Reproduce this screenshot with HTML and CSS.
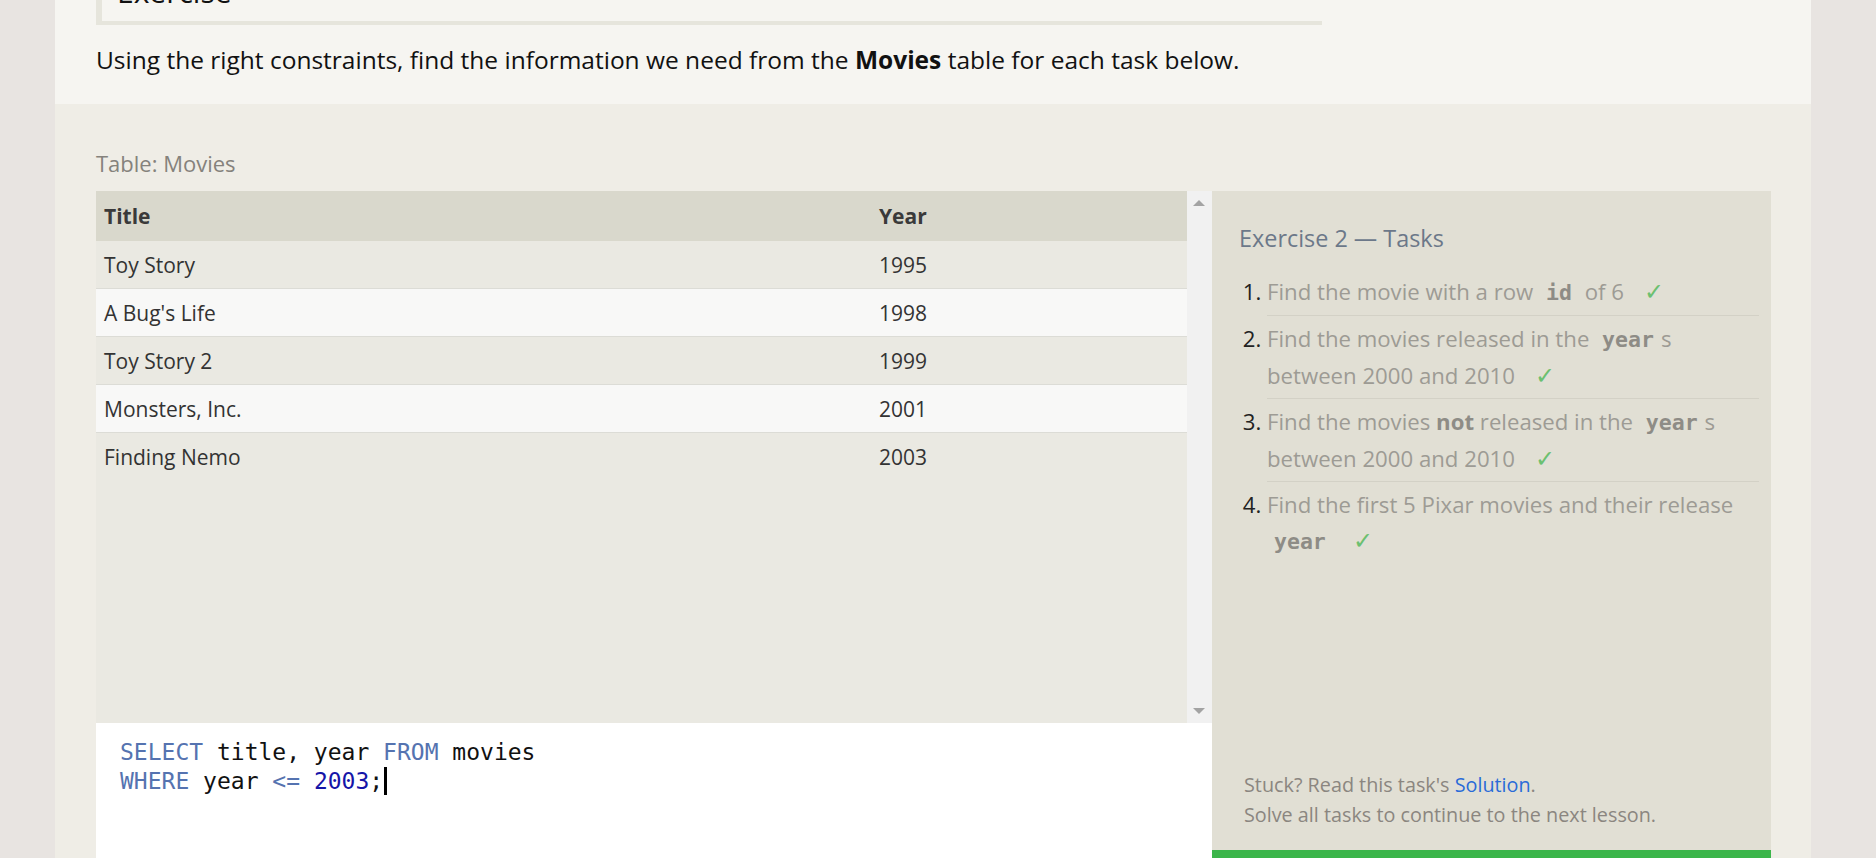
FILE: index.html
```html
<!DOCTYPE html>
<html lang="en">
<head>
<meta charset="utf-8">
<title>SQL Lesson - Exercise</title>
<link rel="stylesheet" href="styles.css">
</head>
<body>
<div class="page">
  <section class="intro">
    <div class="ex-head"><span class="ex-head-text">Exercise</span></div>
    <p class="lead">Using the right constraints, find the information we need from the <strong>Movies</strong> table for each task below.</p>
  </section>
  <section class="exercise">
    <div class="table-label">Table: Movies</div>
    <div class="workspace">
      <div class="left-col">
        <div class="table-wrap">
          <div class="table-scroll">
            <table class="movies">
              <thead>
                <tr><th class="c-title">Title</th><th>Year</th></tr>
              </thead>
              <tbody>
                <tr class="odd"><td>Toy Story</td><td>1995</td></tr>
                <tr class="even"><td>A Bug's Life</td><td>1998</td></tr>
                <tr class="odd"><td>Toy Story 2</td><td>1999</td></tr>
                <tr class="even"><td>Monsters, Inc.</td><td>2001</td></tr>
                <tr class="odd"><td>Finding Nemo</td><td>2003</td></tr>
              </tbody>
            </table>
          </div>
          <div class="scrollbar">
            <span class="arrow up"></span>
            <span class="arrow down"></span>
          </div>
        </div>
        <div class="editor">
          <div class="code-line"><span class="kw">SELECT</span> title, year <span class="kw">FROM</span> movies</div>
          <div class="code-line"><span class="kw">WHERE</span> year <span class="op">&lt;=</span> <span class="num">2003</span>;<span class="cursor"></span></div>
        </div>
      </div>
      <aside class="tasks">
        <h3 class="tasks-title">Exercise 2 — Tasks</h3>
        <ol class="task-list">
          <li><span class="task-text">Find the movie with a row <code>id</code> of 6 <span class="check">✓</span></span></li>
          <li><span class="task-text">Find the movies released in the <code>year</code>s between 2000 and 2010 <span class="check">✓</span></span></li>
          <li><span class="task-text">Find the movies <b>not</b> released in the <code>year</code>s between 2000 and 2010 <span class="check">✓</span></span></li>
          <li class="last"><span class="task-text">Find the first 5 Pixar movies and their release <code>year</code> <span class="check">✓</span></span></li>
        </ol>
        <div class="tasks-foot">
          <p>Stuck? Read this task's <a href="#">Solution</a>.</p>
          <p>Solve all tasks to continue to the next lesson.</p>
        </div>
        <div class="progress"></div>
      </aside>
    </div>
  </section>
</div>
</body>
</html>
```
FILE: styles.css
```css
html, body {
  margin: 0;
  padding: 0;
}
body {
  background: #e8e4e1;
  font-family: "Open Sans", "Noto Sans", sans-serif;
  color: #222;
  overflow: hidden;
  height: 858px;
}
.page {
  margin-left: 55px;
  width: 1756px;
  background: #efede6;
  height: 858px;
}
.intro {
  background: #f6f5f1;
  height: 104px;
  padding: 0 41px;
  box-sizing: border-box;
}
.ex-head {
  width: 1220px;
  height: 21px;
  border-left: 6px solid #e6e5dc;
  border-bottom: 4px solid #e6e5dc;
  overflow: hidden;
}
.ex-head-text {
  display: block;
  margin-left: 15px;
  margin-top: -28px;
  font-size: 30px;
  line-height: 40px;
  color: #111;
}
.lead {
  margin: 0;
  padding-top: 17px;
  font-size: 24.5px;
  line-height: 36px;
  color: #111;
}
.lead strong {
  font-weight: 700;
}
.exercise {
  padding: 0 40px 0 41px;
  border-top-right-radius: 8px;
}
.table-label {
  height: 87px;
  line-height: 30px;
  padding-top: 44px;
  box-sizing: border-box;
  font-size: 22px;
  color: #85827c;
}
.workspace {
  display: flex;
  height: 667px;
}
.left-col {
  width: 1116px;
  display: flex;
  flex-direction: column;
}
.table-wrap {
  height: 532px;
  display: flex;
  background: #eae9e2;
}
.table-scroll {
  flex: 1;
}
.movies {
  width: 100%;
  border-collapse: collapse;
  font-size: 21px;
  color: #333;
}
.movies th {
  background: #d9d8cc;
  height: 50px;
  text-align: left;
  font-weight: 700;
  padding: 0 8px;
  color: #3a3a3a;
}
.movies th.c-title {
  width: 759px;
}
.movies td {
  height: 47px;
  padding: 0 8px;
  border-bottom: 1px solid #dcdcd6;
}
.movies tr.odd td {
  background: #eae9e2;
}
.movies tr.even td {
  background: #f8f8f7;
}
.movies tr:last-child td {
  border-bottom: none;
}
.scrollbar {
  width: 25px;
  background: #f1f1f1;
  position: relative;
}
.arrow {
  position: absolute;
  left: 6px;
  width: 0;
  height: 0;
  border-left: 6px solid transparent;
  border-right: 6px solid transparent;
}
.arrow.up {
  top: 9px;
  border-bottom: 6px solid #a3a3a3;
}
.arrow.down {
  bottom: 9px;
  border-top: 6px solid #a3a3a3;
}
.editor {
  flex: 1;
  background: #fff;
  padding: 15px 24px;
  font-family: "DejaVu Sans Mono", "Liberation Mono", monospace;
  font-size: 23px;
  line-height: 29px;
  color: #111;
}
.code-line {
  white-space: pre;
}
.kw, .op {
  color: #5573b0;
}
.num {
  color: #1515a8;
}
.cursor {
  display: inline-block;
  width: 3px;
  height: 28px;
  background: #000;
  vertical-align: -6px;
  margin-left: 1px;
}
.tasks {
  width: 559px;
  background: #e1dfd4;
  display: flex;
  flex-direction: column;
  padding: 0 12px 0 27px;
  box-sizing: border-box;
}
.tasks-title {
  margin: 0;
  padding-top: 30px;
  font-size: 23.4px;
  font-weight: 400;
  line-height: 34px;
  color: #6c7889;
}
.task-list {
  margin: 14px 0 0;
  padding: 0 0 0 28px;
  font-size: 22.2px;
  line-height: 36px;
  color: #222;
}
.task-list li {
  padding: 5px 0 4px;
  border-bottom: 1px solid #d3d1c6;
}
.task-list li.last {
  border-bottom: none;
}
.task-text {
  color: #9d9b94;
}
.task-list code {
  font-family: "DejaVu Sans Mono", "Liberation Mono", monospace;
  font-weight: 700;
  font-size: 21.5px;
  color: #8e8c86;
  padding: 0 7px;
}
.task-list b {
  color: #8e8c86;
}
.check {
  color: #6cc070;
  font-size: 24px;
  line-height: 1;
  margin-left: 14px;
}
.tasks-foot {
  margin-top: auto;
  padding-left: 5px;
  padding-bottom: 20px;
  font-size: 19.8px;
  line-height: 30px;
  color: #8b8680;
}
.tasks-foot p {
  margin: 0;
}
.tasks-foot a {
  color: #2a6bd8;
  text-decoration: none;
}
.progress {
  height: 8px;
  background: #3bb54a;
  margin: 0 -12px 0 -27px;
}
```
